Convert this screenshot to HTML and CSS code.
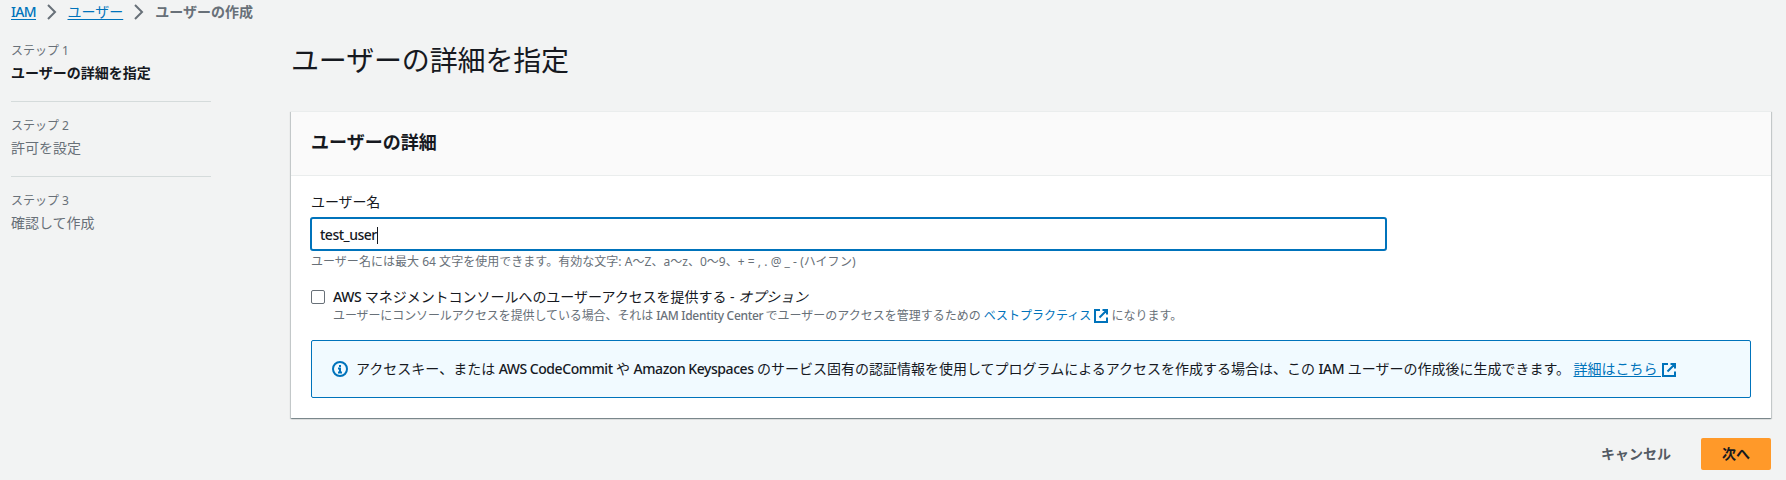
FILE: index.html
```
<!DOCTYPE html>
<html lang="ja">
<head>
<meta charset="utf-8">
<title>ユーザーの作成</title>
<link rel="stylesheet" href="styles.css">
</head>
<body>
<nav class="breadcrumbs">
  <a class="link iam" href="#">IAM</a>
  <svg class="chevron" viewBox="0 0 16 16"><path d="M4 1l7 7-7 7"/></svg>
  <a class="link" href="#">ユーザー</a>
  <svg class="chevron" viewBox="0 0 16 16"><path d="M4 1l7 7-7 7"/></svg>
  <span class="current">ユーザーの作成</span>
</nav>
<div class="layout">
  <ol class="steps">
    <li class="step active"><span class="step-no">ステップ 1</span><span class="step-name">ユーザーの詳細を指定</span></li>
    <li class="step"><span class="step-no">ステップ 2</span><span class="step-name">許可を設定</span></li>
    <li class="step"><span class="step-no">ステップ 3</span><span class="step-name">確認して作成</span></li>
  </ol>
  <main class="main">
    <h1 class="title">ユーザーの詳細を指定</h1>
    <section class="card">
      <header class="card-header"><h2 class="card-title">ユーザーの詳細</h2></header>
      <div class="card-body">
        <div class="label">ユーザー名</div>
        <div class="input"><span class="value">test_user</span><span class="caret"></span></div>
        <div class="hint name-hint">ユーザー名には最大 64 文字を使用できます。有効な文字: A～Z、a～z、0～9、+ = , . @ _ - (ハイフン)</div>
        <div class="check-row">
          <span class="checkbox"></span>
          <div>
            <div class="check-label"><span class="lat">AWS</span> マネジメントコンソールへのユーザーアクセスを提供する - <i>オプション</i></div>
            <div class="hint"><span class="tight">ユーザーにコンソールアクセスを提供している場合、それは</span> <span class="lat-s">IAM Identity Center</span> でユーザーのアクセスを管理するための <a class="plain" href="#">ベストプラクティス <svg class="ext" viewBox="0 0 14 14"><path d="M6 1H1v12h12V8.500M8.500 1H13v4.500M13 1L5.500 8.500"/></svg></a> になります。</div>
          </div>
        </div>
        <div class="alert">
          <svg class="info" viewBox="0 0 16 16"><circle cx="8" cy="8" r="7"/><path d="M8 4v2M6 7.500h2V11M6 11.500h4"/></svg>
          <div class="alert-text">アクセスキー、または <span class="lat">AWS CodeCommit</span> や <span class="lat">Amazon Keyspaces</span> のサービス固有の認証情報を使用してプログラムによるアクセスを作成する場合は、この <span class="lat">IAM</span> ユーザーの作成後に生成できます。 <a class="link more" href="#">詳細はこちら <svg class="ext" viewBox="0 0 14 14"><path d="M6 1H1v12h12V8.500M8.500 1H13v4.500M13 1L5.500 8.500"/></svg></a></div>
        </div>
      </div>
    </section>
    <div class="actions">
      <button class="btn cancel">キャンセル</button>
      <button class="btn next">次へ</button>
    </div>
  </main>
</div>
</body>
</html>
```
FILE: styles.css
```
* { box-sizing: border-box; }
body {
  margin: 0;
  height: 480px;
  overflow: hidden;
  background: #f2f3f3;
  color: #16191f;
  font: 14px/22px "Noto Sans", "Noto Sans CJK JP", sans-serif;
}
.link { color: #0073bb; text-decoration: underline; text-underline-offset: 2px; }
.plain { color: #0073bb; text-decoration: none; }
.breadcrumbs { display: flex; align-items: center; height: 24px; padding-left: 11px; white-space: nowrap; }
.iam { width: 24.5px; letter-spacing: -.65px; font-weight: 500; }
.chevron { width: 16px; height: 16px; margin: 0 8px; fill: none; stroke: #687078; stroke-width: 2; }
.current { color: #687078; font-weight: 700; }
.layout { display: flex; padding: 0 15px 0 11px; }
.steps { width: 200px; margin: 19px 80px 0 0; padding: 0; list-style: none; flex: none; }
.step { display: flex; flex-direction: column; height: 75px; color: #687078; }
.step + .step { border-top: 1px solid #d5dbdb; padding-top: 16px; }
.step:first-child { height: 58px; }
.step-no { height: 16px; font-size: 12px; line-height: 16px; }
.step-name { margin-top: 3px; height: 22px; }
.active .step-name { color: #16191f; font-weight: 700; }
.main { flex: 1; min-width: 0; }
.title { height: 36px; margin: 18px 0 33px; font-size: 28px; line-height: 36px; font-weight: 400; letter-spacing: -.15px; }
.card {
  height: 307px;
  background: #fff;
  border-top: 1px solid #eaeded;
  box-shadow: 0 1px 1px 0 rgba(0,28,36,.3), 1px 1px 1px 0 rgba(0,28,36,.15), -1px 1px 1px 0 rgba(0,28,36,.15);
}
.card-header { height: 64px; padding: 19px 20px 0; background: #fafafa; border-bottom: 1px solid #eaeded; }
.card-title { margin: 0; font-size: 18px; line-height: 22px; }
.card-body { padding: 15px 20px 0; }
.label { height: 22px; letter-spacing: -.1px; }
.input {
  display: flex;
  align-items: center;
  width: 1077px;
  height: 34px;
  margin: 4px 0 3px -1px;
  padding: 2px 8px 0;
  border: 2px solid #0073bb;
  border-radius: 3px;
}
.value { font-weight: 500; letter-spacing: -.5px; }
.caret { width: 1px; height: 17px; background: #16191f; }
.hint { height: 16px; color: #687078; font-size: 12px; line-height: 16px; white-space: nowrap; }
.name-hint { letter-spacing: .03px; }
.check-row { display: flex; height: 38px; margin-top: 16px; }
.checkbox { width: 14px; height: 14px; margin: 4px 8px 0 0; border: 1px solid #687078; border-radius: 2px; background: #fff; flex: none; }
.check-label { height: 22px; line-height: 22px; white-space: nowrap; letter-spacing: -.03px; }
.tight { letter-spacing: -.1px; }
.lat { font-weight: 500; letter-spacing: -.45px; }
.lat-s { margin-right: -1px; font-weight: 500; letter-spacing: -.3px; }
.ext { width: 14px; height: 14px; vertical-align: -3px; fill: none; stroke: #0073bb; stroke-width: 2; }
.more .ext { margin-left: 1px; }
.alert {
  display: flex;
  align-items: center;
  height: 58px;
  margin-top: 16px;
  padding: 0 20px;
  border: 1px solid #0073bb;
  border-radius: 2px;
  background: #f1faff;
}
.info { width: 16px; height: 16px; margin-right: 8px; fill: none; stroke: #0073bb; stroke-width: 2; flex: none; }
.alert-text { height: 22px; white-space: nowrap; word-spacing: -.15px; }
.actions { display: flex; justify-content: flex-end; gap: 10px; margin-top: 20px; }
.btn { height: 32px; padding: 0 20px; border: 0; border-radius: 2px; font: inherit; font-weight: 700; background: none; white-space: nowrap; }
.cancel { color: #545b64; }
.next { width: 70px; background: #ff9929; color: #16191f; }
```
